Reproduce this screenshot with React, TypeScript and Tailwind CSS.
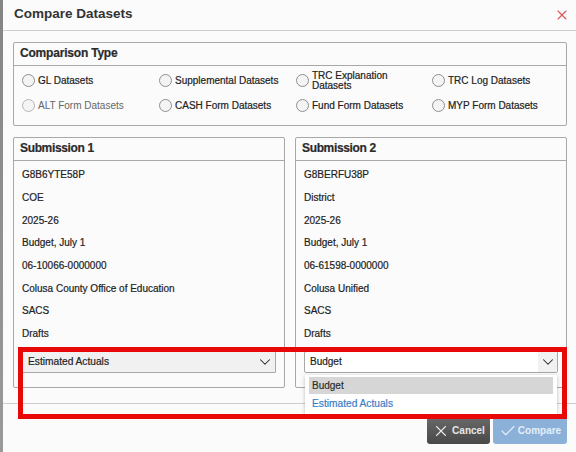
import type { ReactNode } from "react";
import { ChevronDown, Check, X } from "lucide-react";

const types = [
  { label: "GL Datasets" },
  { label: "Supplemental Datasets" },
  { label: "TRC Explanation Datasets" },
  { label: "TRC Log Datasets" },
  { label: "ALT Form Datasets", disabled: true },
  { label: "CASH Form Datasets" },
  { label: "Fund Form Datasets" },
  { label: "MYP Form Datasets" },
];

const sub1 = ["G8B6YTE58P", "COE", "2025-26", "Budget, July 1", "06-10066-0000000", "Colusa County Office of Education", "SACS", "Drafts"];
const sub2 = ["G8BERFU38P", "District", "2025-26", "Budget, July 1", "06-61598-0000000", "Colusa Unified", "SACS", "Drafts"];

const Panel = ({ title, rows, children }: { title: string; rows: string[]; children: ReactNode }) => (
  <div className="flex-1 h-[251px] rounded-[2px] border border-[#a8a8a8]">
    <div className="h-[23px] border-b border-[#a8a8a8] pl-[6px] text-[12px] leading-[20px] tracking-[-0.35px] font-bold text-[#2b2b2b] [-webkit-text-stroke:0.2px_#2b2b2b]">{title}</div>
    <div className="flex flex-col pt-[3.4px]">
      {rows.map((r, i) => (
        <div key={i} className="h-[22.65px] pl-[8px] text-[10px] leading-[22px] text-[#222] [-webkit-text-stroke:0.2px_#222]">
          {r}
        </div>
      ))}
    </div>
    {children}
  </div>
);

export default function App() {
  return (
    <div className="relative h-[452px] w-[576px] overflow-hidden bg-gradient-to-b from-[#858585] to-[#9a9a9a] pl-[3px] font-['Liberation_Sans',Arial,sans-serif]">
      <div className="flex h-full flex-col bg-[#fbfbfb]">
        <div className="flex h-[31px] shrink-0 items-center justify-between border-b border-[#cfcfcf] pb-[1px] pl-[11px] pr-[6px]">
          <span className="text-[13.5px] font-bold text-[#333]">Compare Datasets</span>
          <X size={16} strokeWidth={1.6} className="text-[#e0555a]" />
        </div>

        <div className="flex h-[373px] shrink-0 flex-col gap-[11px] border-b border-[#cfcfcf] pt-[11px] pl-[10px] pr-[9px]">
          <div className="h-[84px] shrink-0 rounded-[2px] border border-[#a8a8a8]">
            <div className="h-[23px] border-b border-[#a8a8a8] pl-[6px] text-[12px] leading-[21px] tracking-[-0.2px] font-bold text-[#2b2b2b] [-webkit-text-stroke:0.2px_#2b2b2b]">Comparison Type</div>
            <div className="grid grid-cols-[137px_137px_136px_1fr] auto-rows-[25px] pl-[8px] pt-[2px]">
              {types.map((t) => (
                <label
                  key={t.label}
                  className={`flex items-center gap-[3px] text-[10px] leading-[10px] ${t.disabled ? "text-[#666]" : "text-[#222] [-webkit-text-stroke:0.2px_#222]"}`}
                >
                  <span className={`h-[13px] w-[13px] shrink-0 rounded-full border bg-[#f4f4f4] ${t.disabled ? "border-[#b5b5b5]" : "border-[#8f8f8f]"}`} />
                  <span className="max-w-[108px]">{t.label}</span>
                </label>
              ))}
            </div>
          </div>

          <div className="flex gap-[10px]">
            <Panel title="Submission 1" rows={sub1}>
              <div className="mx-[8px] mt-[5.8px] flex h-[22px] items-center justify-between rounded-[1px] border border-[#a8a8a8] bg-[#f1f1f1] pb-[1px] pl-[5px] pr-[1px] text-[10.2px] text-[#222] [-webkit-text-stroke:0.2px_#222]">
                Estimated Actuals
                <ChevronDown size={18} strokeWidth={1.4} />
              </div>
            </Panel>
            <Panel title="Submission 2" rows={sub2}>
              <div className="relative mx-[8px] mt-[5.8px] flex h-[22px] items-center justify-between rounded-[2px] border border-[#a8a8a8] bg-white pl-[5px] text-[10px] text-[#222] [-webkit-text-stroke:0.2px_#222]">
                <span className="pb-[1px]">Budget</span>
                <span className="flex h-full w-[19px] items-center justify-center bg-[#f1f1f1]">
                  <ChevronDown size={18} strokeWidth={1.4} />
                </span>
                <div className="absolute left-0 top-[23px] z-10 h-[39px] w-[252px] bg-white px-[4px] pt-[2px] shadow-[0_1px_4px_rgba(0,0,0,0.25)]">
                  <div className="h-[17px] bg-[#d6d6d6] pl-[3px] text-[10px] leading-[18px] text-[#333]">Budget</div>
                  <div className="h-[17px] pl-[3px] text-[10.2px] leading-[19px] text-[#3b7dc4] [-webkit-text-stroke:0.2px_#3b7dc4]">Estimated Actuals</div>
                </div>
              </div>
            </Panel>
          </div>
        </div>

        <div className="flex flex-1 items-start justify-end gap-[3px] pt-[13px] pr-[9px]">
          <button className="flex h-[27px] w-[63px] items-center justify-center gap-[2px] rounded-[3px] bg-gradient-to-b from-[#6a6a6a] to-[#484848] text-[10px] font-bold text-[#e8e8e8]">
            <X size={18} strokeWidth={1.5} />
            Cancel
          </button>
          <button className="flex h-[27px] w-[74px] items-center justify-center gap-[1px] rounded-[3px] bg-[#8cb1d9] text-[10px] font-bold text-[#e6eef7]">
            <Check size={18} strokeWidth={1.5} />
            Compare
          </button>
        </div>
      </div>

      {/* red highlight drawn over the screenshot */}
      <div className="absolute left-[18px] top-[347px] z-20 h-[72px] w-[549px] border-[5px] border-[#e80808]" />
    </div>
  );
}
